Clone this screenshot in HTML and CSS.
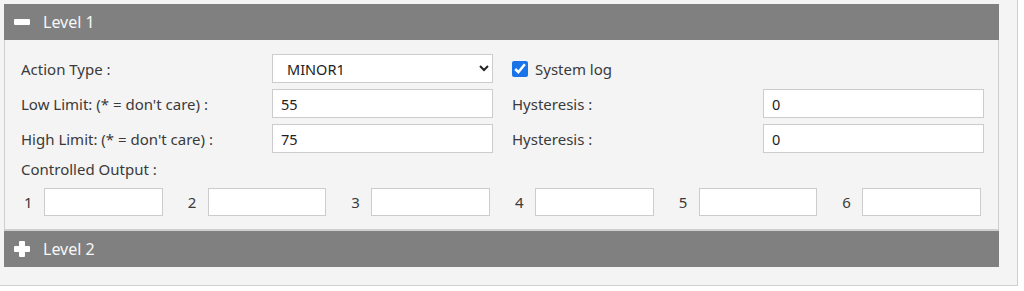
FILE: index.html
```html
<!DOCTYPE html>
<html lang="en">
<head>
  <meta charset="UTF-8">
  <title>Alarm Levels</title>
  <link rel="stylesheet" href="styles.css">
</head>
<body>
  <div class="page">
    <div class="panel">
      <!-- Level 1 (expanded) -->
      <div class="panel-head">
        <span class="toggle minus"></span>
        <span>Level 1</span>
      </div>
      <div class="panel-body">
        <div class="form-grid">
          <label>Action Type :</label>
          <select class="field">
            <option>MINOR1</option>
          </select>
          <label class="check"><input type="checkbox" checked> System log</label>
          <span></span>

          <label>Low Limit: (* = don't care) :</label>
          <input type="text" class="field" value="55">
          <label>Hysteresis :</label>
          <input type="text" class="field" value="0">

          <label>High Limit: (* = don't care) :</label>
          <input type="text" class="field" value="75">
          <label>Hysteresis :</label>
          <input type="text" class="field" value="0">
        </div>

        <div class="outputs-title">Controlled Output :</div>
        <div class="outputs">
          <div class="output"><span>1</span><input type="text" class="field"></div>
          <div class="output"><span>2</span><input type="text" class="field"></div>
          <div class="output"><span>3</span><input type="text" class="field"></div>
          <div class="output"><span>4</span><input type="text" class="field"></div>
          <div class="output"><span>5</span><input type="text" class="field"></div>
          <div class="output"><span>6</span><input type="text" class="field"></div>
        </div>
      </div>

      <!-- Level 2 (collapsed) -->
      <div class="panel-head">
        <span class="toggle plus"></span>
        <span>Level 2</span>
      </div>
    </div>
  </div>
</body>
</html>
```

FILE: styles.css
```css
/* General */
body {
  margin: 0;
  background: #ffffff;
  font-family: 'Noto Sans', 'Open Sans', sans-serif;
  font-size: 15px;
  color: #3a3a3a;
}

.page {
  width: 1018px;
  height: 286px;
  box-sizing: border-box;
  padding: 4px 18px 0 4px;
  background: #f4f4f4;
  border-right: 1px solid #cfcfcf;
  border-bottom: 1px solid #cfcfcf;
}

/* Collapsible header */
.panel-head {
  display: flex;
  align-items: center;
  gap: 13px;
  height: 36px;
  padding-left: 10px;
  background: #808080;
  color: #f7f7f7;
  font-size: 16px;
}

.toggle {
  position: relative;
  width: 16px;
  height: 16px;
  flex-shrink: 0;
}

.toggle::before,
.toggle::after {
  content: '';
  position: absolute;
  background: #fff;
  border-radius: 1px;
}

.toggle::before {
  left: 0;
  top: 5px;
  width: 16px;
  height: 6px;
}

.plus::after {
  left: 5px;
  top: 0;
  width: 6px;
  height: 16px;
}

.panel-body {
  padding: 14px 0 13px 16px;
  border-left: 1px solid #cfcfcf;
  border-right: 1px solid #cfcfcf;
  border-bottom: 2px solid #cfcfcf;
}

/* Form rows */
.form-grid {
  display: grid;
  grid-template-columns: 232px 221px 232px 221px;
  grid-auto-rows: 29px;
  column-gap: 19px;
  row-gap: 6px;
  align-items: center;
}

.field {
  box-sizing: border-box;
  height: 100%;
  width: 100%;
  margin: 0;
  padding: 0 8px;
  border: 1px solid #cccccc;
  background: #fff;
  font-family: inherit;
  font-size: 14.5px;
  color: #222;
  outline: none;
}

select.field {
  padding-left: 10px;
}

.check {
  display: flex;
  align-items: center;
  gap: 7px;
}

.check input {
  width: 16px;
  height: 16px;
  margin: 0;
  accent-color: #1a73e8;
}

.outputs-title {
  margin-top: 6px;
  line-height: 20px;
}

.outputs {
  display: grid;
  grid-template-columns: repeat(6, 1fr);
  column-gap: 22px;
  width: 960px;
  margin-top: 9px;
  height: 28px;
}

.output {
  display: flex;
  align-items: center;
}

.output span {
  width: 23px;
  flex-shrink: 0;
  padding-left: 3px;
  box-sizing: border-box;
}
```
